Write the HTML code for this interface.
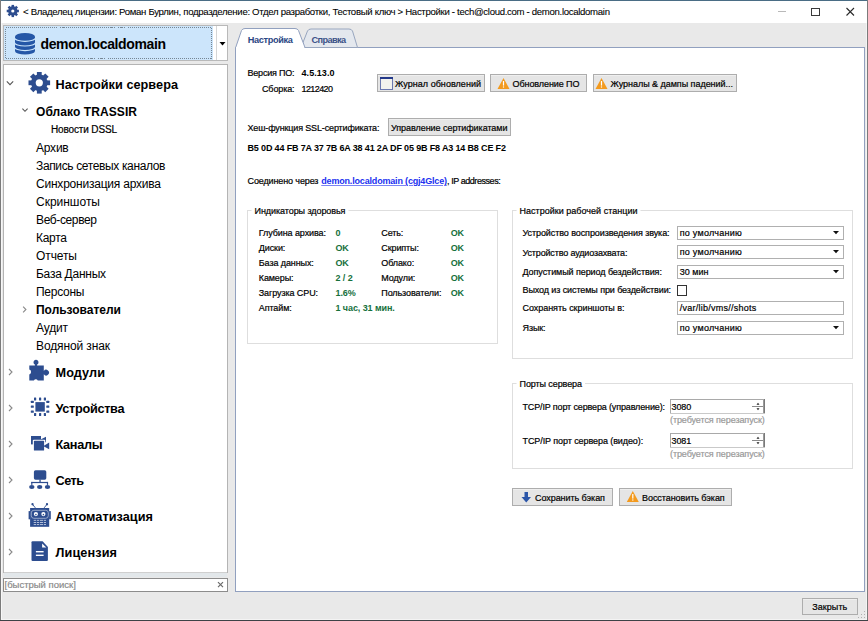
<!DOCTYPE html>
<html><head><meta charset="utf-8"><style>
html,body{margin:0;padding:0;width:868px;height:621px;overflow:hidden;background:#e9e9e9;}
.t{position:absolute;white-space:nowrap;font-family:"Liberation Sans",sans-serif;}
.n{-webkit-text-stroke:0.2px currentColor;}
svg{position:absolute;left:0;top:0;}
</style></head><body>
<svg width="868" height="621" viewBox="0 0 868 621">
<rect x="0" y="0" width="868" height="621" fill="#e9e9e9" />
<rect x="1" y="1" width="866" height="22" fill="#ffffff" />
<rect x="0" y="0" width="868" height="1" fill="#4a6d85" />
<rect x="0" y="0" width="1" height="621" fill="#7b7b7b" />
<rect x="867" y="0" width="1" height="621" fill="#7b7b7b" />
<rect x="0" y="620" width="868" height="1" fill="#3e4246" />
<rect x="1" y="23" width="1" height="597" fill="#f7f7f7" />
<rect x="1" y="619" width="866" height="1" fill="#f4f4f4" />
<rect x="866" y="23" width="1" height="597" fill="#f4f4f4" />
<rect x="11.55" y="4.9" width="2.5" height="6.1" fill="#2d4d8f" transform="rotate(0 12.8 11.0)"/>
<rect x="11.55" y="4.9" width="2.5" height="6.1" fill="#2d4d8f" transform="rotate(45 12.8 11.0)"/>
<rect x="11.55" y="4.9" width="2.5" height="6.1" fill="#2d4d8f" transform="rotate(90 12.8 11.0)"/>
<rect x="11.55" y="4.9" width="2.5" height="6.1" fill="#2d4d8f" transform="rotate(135 12.8 11.0)"/>
<rect x="11.55" y="4.9" width="2.5" height="6.1" fill="#2d4d8f" transform="rotate(180 12.8 11.0)"/>
<rect x="11.55" y="4.9" width="2.5" height="6.1" fill="#2d4d8f" transform="rotate(225 12.8 11.0)"/>
<rect x="11.55" y="4.9" width="2.5" height="6.1" fill="#2d4d8f" transform="rotate(270 12.8 11.0)"/>
<rect x="11.55" y="4.9" width="2.5" height="6.1" fill="#2d4d8f" transform="rotate(315 12.8 11.0)"/>
<circle cx="12.8" cy="11.0" r="4.7" fill="#2d4d8f"/>
<circle cx="12.8" cy="11.0" r="1.6" fill="#fff"/>
<rect x="778" y="11" width="8" height="1" fill="#b9b9b9" />
<rect x="811" y="8" width="9" height="1" fill="#3a3a3a" />
<rect x="811" y="15" width="9" height="1" fill="#3a3a3a" />
<rect x="811" y="8" width="1" height="8" fill="#3a3a3a" />
<rect x="819" y="8" width="1" height="8" fill="#3a3a3a" />
<path d="M846.5,8 L854,15.5 M854,8 L846.5,15.5" fill="none" stroke="#2a2a2a" stroke-width="1.1" />
<rect x="3" y="25" width="225" height="36" fill="#ffffff" />
<rect x="3" y="25" width="225" height="1" fill="#b9b9b9" />
<rect x="3" y="60" width="225" height="1" fill="#b9b9b9" />
<rect x="3" y="25" width="1" height="36" fill="#b9b9b9" />
<rect x="227" y="25" width="1" height="36" fill="#b9b9b9" />
<rect x="4" y="26" width="209" height="34" fill="#cce5fb" />
<rect x="5.5" y="27.5" width="206" height="31" fill="none" stroke="#3c4650" stroke-width="1" stroke-dasharray="1 1" shape-rendering="crispEdges" opacity="0.6"/>
<rect x="216" y="26" width="1" height="34" fill="#d6d6d6" />
<path d="M219.5,42 L225.5,42 L222.5,45.5 Z" fill="#000" stroke="none" stroke-width="1" />
<path d="M15,37 L15,51 A10,3.6 0 0 0 35,51 L35,37 Z" fill="#2557a7" stroke="none" stroke-width="1" />
<ellipse cx="25" cy="36.6" rx="10" ry="3.6" fill="#2557a7"/>
<path d="M14.5,37.8 A10.5,3.6 0 0 0 35.5,37.8" fill="none" stroke="#cce5fb" stroke-width="1.1" />
<path d="M14.5,42.4 A10.5,3.6 0 0 0 35.5,42.4" fill="none" stroke="#cce5fb" stroke-width="1.1" />
<path d="M14.5,47.0 A10.5,3.6 0 0 0 35.5,47.0" fill="none" stroke="#cce5fb" stroke-width="1.1" />
<rect x="3" y="64" width="225" height="509" fill="#ffffff" />
<rect x="3" y="64" width="225" height="1" fill="#b4b4b4" />
<rect x="3" y="572" width="225" height="1" fill="#b4b4b4" />
<rect x="3" y="64" width="1" height="509" fill="#b4b4b4" />
<rect x="227" y="64" width="1" height="509" fill="#b4b4b4" />
<path d="M6.8,81.4 L10,84.6 L13.2,81.4" fill="none" stroke="#555" stroke-width="1.1" />
<rect x="36.9" y="72.0" width="4.8" height="10.8" fill="#2d4d8f" transform="rotate(0 39.3 82.8)"/>
<rect x="36.9" y="72.0" width="4.8" height="10.8" fill="#2d4d8f" transform="rotate(45 39.3 82.8)"/>
<rect x="36.9" y="72.0" width="4.8" height="10.8" fill="#2d4d8f" transform="rotate(90 39.3 82.8)"/>
<rect x="36.9" y="72.0" width="4.8" height="10.8" fill="#2d4d8f" transform="rotate(135 39.3 82.8)"/>
<rect x="36.9" y="72.0" width="4.8" height="10.8" fill="#2d4d8f" transform="rotate(180 39.3 82.8)"/>
<rect x="36.9" y="72.0" width="4.8" height="10.8" fill="#2d4d8f" transform="rotate(225 39.3 82.8)"/>
<rect x="36.9" y="72.0" width="4.8" height="10.8" fill="#2d4d8f" transform="rotate(270 39.3 82.8)"/>
<rect x="36.9" y="72.0" width="4.8" height="10.8" fill="#2d4d8f" transform="rotate(315 39.3 82.8)"/>
<circle cx="39.3" cy="82.8" r="8.3" fill="#2d4d8f"/>
<circle cx="39.3" cy="82.8" r="3.6" fill="#fff"/>
<path d="M22.4,108.7 L25,111.3 L27.6,108.7" fill="none" stroke="#555" stroke-width="1.1" />
<path d="M23.1,306.7 L25.9,309.5 L23.1,312.3" fill="none" stroke="#8a8a8a" stroke-width="1.1" />
<path d="M9.0,369.0 L12.0,372 L9.0,375.0" fill="none" stroke="#8a8a8a" stroke-width="1.1" />
<path d="M9.0,405.0 L12.0,408 L9.0,411.0" fill="none" stroke="#8a8a8a" stroke-width="1.1" />
<path d="M9.0,441.0 L12.0,444 L9.0,447.0" fill="none" stroke="#8a8a8a" stroke-width="1.1" />
<path d="M9.0,477.0 L12.0,480 L9.0,483.0" fill="none" stroke="#8a8a8a" stroke-width="1.1" />
<path d="M9.0,513.0 L12.0,516 L9.0,519.0" fill="none" stroke="#8a8a8a" stroke-width="1.1" />
<path d="M9.0,549.0 L12.0,552 L9.0,555.0" fill="none" stroke="#8a8a8a" stroke-width="1.1" />
<path d="M29.3,365.4 L34.9,365.4 L34.9,364.6 A2.5,2.5 0 1 1 37.1,364.6 L37.1,365.4 L43.8,365.4 L43.8,371.0 A2.8,2.8 0 1 1 43.8,374.2 L43.8,380.4 L37.8,380.4 A2.2,2.2 0 0 0 33.9,380.4 L29.3,380.4 L29.3,374.4 A2.5,2.5 0 0 0 29.3,369.6 Z" fill="#2d4d8f" stroke="none" stroke-width="1" />
<rect x="35.4" y="402.1" width="9.4" height="9.5" fill="#2d4d8f" />
<rect x="34.0" y="397.6" width="2.2" height="2.9" rx="0.5" fill="#2d4d8f"/>
<rect x="34.0" y="413.1" width="2.2" height="2.9" rx="0.5" fill="#2d4d8f"/>
<rect x="39.0" y="397.6" width="2.2" height="2.9" rx="0.5" fill="#2d4d8f"/>
<rect x="39.0" y="413.1" width="2.2" height="2.9" rx="0.5" fill="#2d4d8f"/>
<rect x="43.8" y="397.6" width="2.2" height="2.9" rx="0.5" fill="#2d4d8f"/>
<rect x="43.8" y="413.1" width="2.2" height="2.9" rx="0.5" fill="#2d4d8f"/>
<rect x="30.8" y="400.79999999999995" width="3.0" height="2.2" rx="0.5" fill="#2d4d8f"/>
<rect x="46.3" y="400.79999999999995" width="3.0" height="2.2" rx="0.5" fill="#2d4d8f"/>
<rect x="30.8" y="405.59999999999997" width="3.0" height="2.2" rx="0.5" fill="#2d4d8f"/>
<rect x="46.3" y="405.59999999999997" width="3.0" height="2.2" rx="0.5" fill="#2d4d8f"/>
<rect x="30.8" y="410.5" width="3.0" height="2.2" rx="0.5" fill="#2d4d8f"/>
<rect x="46.3" y="410.5" width="3.0" height="2.2" rx="0.5" fill="#2d4d8f"/>
<rect x="31" y="436" width="10" height="8.4" fill="#2d4d8f" />
<path d="M40.5,439.6 L46,436.7 L46,442.2 L40.5,442.2 Z" fill="#2d4d8f" stroke="none" stroke-width="1" />
<rect x="32.8" y="439.7" width="12.5" height="11.5" rx="1" fill="#ffffff"/>
<rect x="33.9" y="440.8" width="10.2" height="9.7" rx="0.6" fill="#2d4d8f"/>
<path d="M43.5,445.9 L49.2,442.5 L49.2,449.3 L43.5,446.2 Z" fill="#2d4d8f" stroke="none" stroke-width="1" />
<rect x="33.9" y="470.3" width="12.4" height="9.4" rx="1.6" fill="#2d4d8f"/>
<rect x="39.4" y="479.5" width="1.3" height="3" fill="#2d4d8f" />
<rect x="31.3" y="481.9" width="16.4" height="1.2" fill="#2d4d8f" />
<rect x="31.2" y="481.9" width="1.2" height="3" fill="#2d4d8f" />
<rect x="46.9" y="481.9" width="1.2" height="3" fill="#2d4d8f" />
<ellipse cx="31.8" cy="486.9" rx="2.7" ry="2.0" fill="#2d4d8f"/>
<ellipse cx="39.7" cy="486.9" rx="2.7" ry="2.0" fill="#2d4d8f"/>
<ellipse cx="47.5" cy="486.9" rx="2.7" ry="2.0" fill="#2d4d8f"/>
<path d="M32.5,504.3 L35.4,507.9 M47,504.3 L44.1,507.9" fill="none" stroke="#2d4d8f" stroke-width="0.9" />
<circle cx="32.5" cy="504.25" r="1.15" fill="#2d4d8f"/><circle cx="47" cy="504.25" r="1.15" fill="#2d4d8f"/>
<rect x="30.1" y="508" width="19.1" height="18.8" fill="#2d4d8f" />
<rect x="28.6" y="511.1" width="1.6" height="8.2" fill="#2d4d8f" />
<rect x="49.1" y="511.1" width="1.7" height="8.2" fill="#2d4d8f" />
<rect x="31.3" y="510.3" width="17" height="8" rx="2.6" fill="none" stroke="#aebbd6" stroke-width="0.8"/>
<circle cx="35.9" cy="514.1" r="2.1" fill="#fff"/><circle cx="43.4" cy="514.1" r="2.1" fill="#fff"/>
<circle cx="35.9" cy="514.6" r="0.8" fill="#2d4d8f"/><circle cx="43.4" cy="514.6" r="0.8" fill="#2d4d8f"/>
<rect x="33.7" y="519.8499999999999" width="2.5" height="0.9" fill="#c2cbe0" />
<rect x="37.0" y="519.8499999999999" width="2.200000000000003" height="0.9" fill="#c2cbe0" />
<rect x="40.0" y="519.8499999999999" width="3.0" height="0.9" fill="#c2cbe0" />
<rect x="43.8" y="519.8499999999999" width="2.200000000000003" height="0.9" fill="#c2cbe0" />
<rect x="33.7" y="522.05" width="2.5" height="0.9" fill="#c2cbe0" />
<rect x="37.0" y="522.05" width="2.200000000000003" height="0.9" fill="#c2cbe0" />
<rect x="40.0" y="522.05" width="3.0" height="0.9" fill="#c2cbe0" />
<rect x="43.8" y="522.05" width="2.200000000000003" height="0.9" fill="#c2cbe0" />
<rect x="33.7" y="524.15" width="2.5" height="0.9" fill="#c2cbe0" />
<rect x="37.0" y="524.15" width="2.200000000000003" height="0.9" fill="#c2cbe0" />
<rect x="40.0" y="524.15" width="3.0" height="0.9" fill="#c2cbe0" />
<rect x="43.8" y="524.15" width="2.200000000000003" height="0.9" fill="#c2cbe0" />
<path d="M32.5,541.3 L42.6,541.3 L47.9,546.9 L47.9,559.9 Q47.9,560.9 46.9,560.9 L32.5,560.9 Q31.5,560.9 31.5,559.9 L31.5,542.3 Q31.5,541.3 32.5,541.3 Z" fill="#2d4d8f" stroke="none" stroke-width="1" />
<path d="M42.1,543.5 L46.3,547.5 L42.1,547.5 Z" fill="#fff" stroke="none" stroke-width="1" />
<rect x="35.9" y="551.0" width="7.7" height="1.4" fill="#fff" />
<rect x="35.9" y="554.6" width="7.7" height="1.4" fill="#fff" />
<rect x="4" y="573" width="223" height="4" fill="#e2e7ea" />
<rect x="4" y="572" width="223" height="1" fill="#cfcfcf" />
<rect x="3" y="578" width="225" height="14" fill="#ffffff" />
<rect x="3" y="578" width="225" height="1" fill="#8c8c8c" />
<rect x="3" y="591" width="225" height="1" fill="#8c8c8c" />
<rect x="3" y="578" width="1" height="14" fill="#8c8c8c" />
<rect x="227" y="578" width="1" height="14" fill="#8c8c8c" />
<path d="M218.0,582.2 L223.0,587.2 M223.0,582.2 L218.0,587.2" fill="none" stroke="#6a6a6a" stroke-width="1.2" />
<rect x="235" y="47" width="630" height="545" fill="#ffffff" />
<rect x="235" y="47" width="630" height="1" fill="#91a0bf" />
<rect x="235" y="591" width="630" height="1" fill="#91a0bf" />
<rect x="235" y="47" width="1" height="545" fill="#91a0bf" />
<rect x="864" y="47" width="1" height="545" fill="#91a0bf" />
<path d="M301,47.5 L307.5,31 Q308.5,29 311,29 L349,29 Q351.5,29 352.5,31 L357.5,47.5 Z" fill="#e4e8ee" stroke="#98a6bf" stroke-width="1" />
<path d="M235.5,48 L241.5,30.5 Q242.5,28.5 245,28.5 L295,28.5 Q297.5,28.5 298.5,30.5 L305,47.5" fill="#ffffff" stroke="#91a0bf" stroke-width="1" />
<rect x="236" y="47" width="68" height="1" fill="#ffffff" />
<rect x="377" y="74" width="108" height="18" fill="#e5e5e5" />
<rect x="377" y="74" width="108" height="1" fill="#adadad" />
<rect x="377" y="91" width="108" height="1" fill="#adadad" />
<rect x="377" y="74" width="1" height="18" fill="#adadad" />
<rect x="484" y="74" width="1" height="18" fill="#adadad" />
<rect x="378" y="75" width="106" height="1" fill="#efefef" />
<rect x="380" y="77" width="13" height="13" fill="#f2f2ee" />
<rect x="380" y="77" width="13" height="1" fill="#6a78b0" />
<rect x="380" y="89" width="13" height="1" fill="#6a78b0" />
<rect x="380" y="77" width="1" height="13" fill="#6a78b0" />
<rect x="392" y="77" width="1" height="13" fill="#6a78b0" />
<rect x="380" y="77" width="13" height="2" fill="#24398a" />
<rect x="490" y="74" width="97" height="18" fill="#e5e5e5" />
<rect x="490" y="74" width="97" height="1" fill="#adadad" />
<rect x="490" y="91" width="97" height="1" fill="#adadad" />
<rect x="490" y="74" width="1" height="18" fill="#adadad" />
<rect x="586" y="74" width="1" height="18" fill="#adadad" />
<rect x="491" y="75" width="95" height="1" fill="#efefef" />
<path d="M503.5,78 L509.5,89 L497.5,89 Z" fill="#f39a1e" stroke="none" stroke-width="1" stroke="#f39a1e" stroke-width="0.6" stroke-linejoin="round"/>
<rect x="502.9" y="81" width="1.2" height="4.6" fill="#fff" />
<rect x="502.9" y="86.4" width="1.2" height="1.2" fill="#fff" />
<rect x="593" y="74" width="144" height="18" fill="#e5e5e5" />
<rect x="593" y="74" width="144" height="1" fill="#adadad" />
<rect x="593" y="91" width="144" height="1" fill="#adadad" />
<rect x="593" y="74" width="1" height="18" fill="#adadad" />
<rect x="736" y="74" width="1" height="18" fill="#adadad" />
<rect x="594" y="75" width="142" height="1" fill="#efefef" />
<path d="M601.5,78 L607.5,89 L595.5,89 Z" fill="#f39a1e" stroke="none" stroke-width="1" stroke="#f39a1e" stroke-width="0.6" stroke-linejoin="round"/>
<rect x="600.9" y="81" width="1.2" height="4.6" fill="#fff" />
<rect x="600.9" y="86.4" width="1.2" height="1.2" fill="#fff" />
<rect x="388" y="118" width="123" height="18" fill="#e5e5e5" />
<rect x="388" y="118" width="123" height="1" fill="#adadad" />
<rect x="388" y="135" width="123" height="1" fill="#adadad" />
<rect x="388" y="118" width="1" height="18" fill="#adadad" />
<rect x="510" y="118" width="1" height="18" fill="#adadad" />
<rect x="389" y="119" width="121" height="1" fill="#efefef" />
<rect x="247" y="210" width="251" height="1" fill="#dedede" />
<rect x="247" y="343" width="251" height="1" fill="#dedede" />
<rect x="247" y="210" width="1" height="134" fill="#dedede" />
<rect x="497" y="210" width="1" height="134" fill="#dedede" />
<rect x="251.5" y="210" width="97.0" height="1" fill="#ffffff" />
<rect x="512" y="210" width="341" height="1" fill="#dedede" />
<rect x="512" y="358" width="341" height="1" fill="#dedede" />
<rect x="512" y="210" width="1" height="149" fill="#dedede" />
<rect x="852" y="210" width="1" height="149" fill="#dedede" />
<rect x="516.5" y="210" width="124.0" height="1" fill="#ffffff" />
<rect x="677" y="226" width="167" height="14" fill="#ffffff" />
<rect x="677" y="226" width="167" height="1" fill="#b0b0b0" />
<rect x="677" y="239" width="167" height="1" fill="#b0b0b0" />
<rect x="677" y="226" width="1" height="14" fill="#b0b0b0" />
<rect x="843" y="226" width="1" height="14" fill="#b0b0b0" />
<path d="M833,231.0 L839,231.0 L836,234.3 Z" fill="#111" stroke="none" stroke-width="1" />
<rect x="677" y="245" width="167" height="14" fill="#ffffff" />
<rect x="677" y="245" width="167" height="1" fill="#b0b0b0" />
<rect x="677" y="258" width="167" height="1" fill="#b0b0b0" />
<rect x="677" y="245" width="1" height="14" fill="#b0b0b0" />
<rect x="843" y="245" width="1" height="14" fill="#b0b0b0" />
<path d="M833,250.0 L839,250.0 L836,253.3 Z" fill="#111" stroke="none" stroke-width="1" />
<rect x="677" y="265" width="167" height="14" fill="#ffffff" />
<rect x="677" y="265" width="167" height="1" fill="#b0b0b0" />
<rect x="677" y="278" width="167" height="1" fill="#b0b0b0" />
<rect x="677" y="265" width="1" height="14" fill="#b0b0b0" />
<rect x="843" y="265" width="1" height="14" fill="#b0b0b0" />
<path d="M833,270.0 L839,270.0 L836,273.3 Z" fill="#111" stroke="none" stroke-width="1" />
<rect x="677" y="285" width="10" height="11" fill="#ffffff" />
<rect x="677" y="285" width="10" height="1" fill="#333333" />
<rect x="677" y="295" width="10" height="1" fill="#333333" />
<rect x="677" y="285" width="1" height="11" fill="#333333" />
<rect x="686" y="285" width="1" height="11" fill="#333333" />
<rect x="677" y="301" width="167" height="14" fill="#ffffff" />
<rect x="677" y="301" width="167" height="1" fill="#b0b0b0" />
<rect x="677" y="314" width="167" height="1" fill="#b0b0b0" />
<rect x="677" y="301" width="1" height="14" fill="#b0b0b0" />
<rect x="843" y="301" width="1" height="14" fill="#b0b0b0" />
<rect x="677" y="321" width="167" height="14" fill="#ffffff" />
<rect x="677" y="321" width="167" height="1" fill="#b0b0b0" />
<rect x="677" y="334" width="167" height="1" fill="#b0b0b0" />
<rect x="677" y="321" width="1" height="14" fill="#b0b0b0" />
<rect x="843" y="321" width="1" height="14" fill="#b0b0b0" />
<path d="M833,326.0 L839,326.0 L836,329.3 Z" fill="#111" stroke="none" stroke-width="1" />
<rect x="512" y="383" width="341" height="1" fill="#dedede" />
<rect x="512" y="468" width="341" height="1" fill="#dedede" />
<rect x="512" y="383" width="1" height="86" fill="#dedede" />
<rect x="852" y="383" width="1" height="86" fill="#dedede" />
<rect x="516.5" y="383" width="68.5" height="1" fill="#ffffff" />
<rect x="670" y="399" width="95" height="15" fill="#ffffff" />
<rect x="670" y="399" width="95" height="1" fill="#a9a9a9" />
<rect x="670" y="413" width="95" height="1" fill="#a9a9a9" />
<rect x="670" y="399" width="1" height="15" fill="#a9a9a9" />
<rect x="764" y="399" width="1" height="15" fill="#a9a9a9" />
<rect x="764" y="399" width="1" height="15" fill="#7a7a7a" />
<rect x="670" y="413" width="95" height="1" fill="#c9c9c9" />
<rect x="752" y="406" width="12" height="1" fill="#8a8a8a" />
<rect x="763" y="400" width="1" height="13" fill="#9a9a9a" />
<path d="M756.5,404.8 L758,402.8 L759.5,404.8 Z" fill="#222" stroke="none" stroke-width="1" />
<path d="M756.5,408.2 L758,410.2 L759.5,408.2 Z" fill="#222" stroke="none" stroke-width="1" />
<rect x="670" y="433" width="95" height="15" fill="#ffffff" />
<rect x="670" y="433" width="95" height="1" fill="#a9a9a9" />
<rect x="670" y="447" width="95" height="1" fill="#a9a9a9" />
<rect x="670" y="433" width="1" height="15" fill="#a9a9a9" />
<rect x="764" y="433" width="1" height="15" fill="#a9a9a9" />
<rect x="764" y="433" width="1" height="15" fill="#7a7a7a" />
<rect x="670" y="447" width="95" height="1" fill="#c9c9c9" />
<rect x="752" y="440" width="12" height="1" fill="#8a8a8a" />
<rect x="763" y="434" width="1" height="13" fill="#9a9a9a" />
<path d="M756.5,438.8 L758,436.8 L759.5,438.8 Z" fill="#222" stroke="none" stroke-width="1" />
<path d="M756.5,442.2 L758,444.2 L759.5,442.2 Z" fill="#222" stroke="none" stroke-width="1" />
<rect x="512" y="488" width="101" height="18" fill="#e5e5e5" />
<rect x="512" y="488" width="101" height="1" fill="#adadad" />
<rect x="512" y="505" width="101" height="1" fill="#adadad" />
<rect x="512" y="488" width="1" height="18" fill="#adadad" />
<rect x="612" y="488" width="1" height="18" fill="#adadad" />
<rect x="513" y="489" width="99" height="1" fill="#efefef" />
<path d="M524.5,492 L528,492 L528,497 L531,497 L526.25,502.5 L521.5,497 L524.5,497 Z" fill="#2a55a8" stroke="none" stroke-width="1" />
<rect x="619" y="488" width="113" height="18" fill="#e5e5e5" />
<rect x="619" y="488" width="113" height="1" fill="#adadad" />
<rect x="619" y="505" width="113" height="1" fill="#adadad" />
<rect x="619" y="488" width="1" height="18" fill="#adadad" />
<rect x="731" y="488" width="1" height="18" fill="#adadad" />
<rect x="620" y="489" width="111" height="1" fill="#efefef" />
<path d="M632.8,491 L638.8,502 L626.8,502 Z" fill="#f39a1e" stroke="none" stroke-width="1" stroke="#f39a1e" stroke-width="0.6" stroke-linejoin="round"/>
<rect x="632.1999999999999" y="494" width="1.2" height="4.6" fill="#fff" />
<rect x="632.1999999999999" y="499.4" width="1.2" height="1.2" fill="#fff" />
<rect x="802" y="598" width="56" height="17" fill="#e5e5e5" />
<rect x="802" y="598" width="56" height="1" fill="#adadad" />
<rect x="802" y="614" width="56" height="1" fill="#adadad" />
<rect x="802" y="598" width="1" height="17" fill="#adadad" />
<rect x="857" y="598" width="1" height="17" fill="#adadad" />
<rect x="803" y="599" width="54" height="1" fill="#efefef" />
<rect x="864" y="614" width="1" height="1" fill="#b0b0b0" />
<rect x="864" y="617" width="1" height="1" fill="#b0b0b0" />
<rect x="861" y="617" width="1" height="1" fill="#b0b0b0" />
<rect x="864" y="611" width="1" height="1" fill="#b0b0b0" />
<rect x="861" y="614" width="1" height="1" fill="#b0b0b0" />
<rect x="858" y="617" width="1" height="1" fill="#b0b0b0" />
</svg>
<div class="t n" style="left:23.00px;top:7.00px;font-size:9.6px;line-height:9.6px;font-weight:400;color:#000;letter-spacing:-0.315px;-webkit-text-stroke:0.08px #000;">&lt; Владелец лицензии: Роман Бурлин, подразделение: Отдел разработки, Тестовый ключ &gt; Настройки - tech@cloud.com - demon.localdomain</div>
<div class="t" style="left:40.50px;top:37.00px;font-size:14px;line-height:14px;font-weight:700;color:#000;letter-spacing:-0.373px;">demon.localdomain</div>
<div class="t" style="left:55.50px;top:79.00px;font-size:12.7px;line-height:12.7px;font-weight:700;color:#000;letter-spacing:0.042px;">Настройки сервера</div>
<div class="t" style="left:36.00px;top:106.00px;font-size:12px;line-height:12px;font-weight:700;color:#000;letter-spacing:0.082px;">Облако TRASSIR</div>
<div class="t n" style="left:51.00px;top:125.00px;font-size:10px;line-height:10px;font-weight:400;color:#000;letter-spacing:-0.148px;">Новости DSSL</div>
<div class="t" style="left:36.00px;top:142.00px;font-size:12px;line-height:12px;font-weight:400;color:#000;letter-spacing:-0.219px;">Архив</div>
<div class="t" style="left:36.00px;top:160.00px;font-size:12px;line-height:12px;font-weight:400;color:#000;letter-spacing:-0.359px;">Запись сетевых каналов</div>
<div class="t" style="left:36.00px;top:178.00px;font-size:12px;line-height:12px;font-weight:400;color:#000;letter-spacing:-0.215px;">Синхронизация архива</div>
<div class="t" style="left:36.00px;top:196.00px;font-size:12px;line-height:12px;font-weight:400;color:#000;letter-spacing:-0.010px;">Скриншоты</div>
<div class="t" style="left:36.00px;top:214.00px;font-size:12px;line-height:12px;font-weight:400;color:#000;letter-spacing:-0.373px;">Веб-сервер</div>
<div class="t" style="left:36.00px;top:232.00px;font-size:12px;line-height:12px;font-weight:400;color:#000;letter-spacing:-0.277px;">Карта</div>
<div class="t" style="left:36.00px;top:250.00px;font-size:12px;line-height:12px;font-weight:400;color:#000;letter-spacing:-0.097px;">Отчеты</div>
<div class="t" style="left:36.00px;top:268.00px;font-size:12px;line-height:12px;font-weight:400;color:#000;letter-spacing:-0.261px;">База Данных</div>
<div class="t" style="left:36.00px;top:286.00px;font-size:12px;line-height:12px;font-weight:400;color:#000;letter-spacing:-0.258px;">Персоны</div>
<div class="t" style="left:36.00px;top:304.00px;font-size:12px;line-height:12px;font-weight:700;color:#000;letter-spacing:-0.010px;">Пользователи</div>
<div class="t" style="left:36.00px;top:322.00px;font-size:12px;line-height:12px;font-weight:400;color:#000;letter-spacing:-0.168px;">Аудит</div>
<div class="t" style="left:36.00px;top:340.00px;font-size:12px;line-height:12px;font-weight:400;color:#000;letter-spacing:-0.119px;">Водяной знак</div>
<div class="t" style="left:55.50px;top:367.00px;font-size:12.7px;line-height:12.7px;font-weight:700;color:#000;letter-spacing:0.078px;">Модули</div>
<div class="t" style="left:55.50px;top:403.00px;font-size:12.7px;line-height:12.7px;font-weight:700;color:#000;letter-spacing:-0.292px;">Устройства</div>
<div class="t" style="left:55.50px;top:439.00px;font-size:12.7px;line-height:12.7px;font-weight:700;color:#000;letter-spacing:-0.316px;">Каналы</div>
<div class="t" style="left:55.50px;top:475.00px;font-size:12.7px;line-height:12.7px;font-weight:700;color:#000;letter-spacing:-0.526px;">Сеть</div>
<div class="t" style="left:55.50px;top:511.00px;font-size:12.7px;line-height:12.7px;font-weight:700;color:#000;letter-spacing:0.040px;">Автоматизация</div>
<div class="t" style="left:55.50px;top:547.00px;font-size:12.7px;line-height:12.7px;font-weight:700;color:#000;letter-spacing:0.109px;">Лицензия</div>
<div class="t n" style="left:4.50px;top:580.00px;font-size:9.5px;line-height:9.5px;font-weight:400;color:#8a8a8a;">[быстрый поиск]</div>
<div class="t" style="left:247.70px;top:36.00px;font-size:9.2px;line-height:9.2px;font-weight:700;color:#2b4683;letter-spacing:-0.342px;">Настройка</div>
<div class="t" style="left:311.50px;top:36.00px;font-size:9.2px;line-height:9.2px;font-weight:700;color:#3b5288;letter-spacing:-0.628px;">Справка</div>
<div class="t n" style="left:247.50px;top:69.00px;font-size:9px;line-height:9px;font-weight:400;color:#000;letter-spacing:-0.210px;">Версия ПО:</div>
<div class="t" style="left:301.50px;top:69.00px;font-size:9px;line-height:9px;font-weight:700;color:#000;letter-spacing:0.067px;">4.5.13.0</div>
<div class="t n" style="left:262.00px;top:85.00px;font-size:9px;line-height:9px;font-weight:400;color:#000;letter-spacing:-0.135px;">Сборка:</div>
<div class="t n" style="left:301.50px;top:85.00px;font-size:9px;line-height:9px;font-weight:400;color:#000;letter-spacing:-0.591px;">1212420</div>
<div class="t n" style="left:395.00px;top:80.00px;font-size:9px;line-height:9px;font-weight:400;color:#000;letter-spacing:0.041px;">Журнал обновлений</div>
<div class="t n" style="left:512.50px;top:80.00px;font-size:9px;line-height:9px;font-weight:400;color:#000;letter-spacing:-0.078px;">Обновление ПО</div>
<div class="t n" style="left:610.50px;top:80.00px;font-size:9px;line-height:9px;font-weight:400;color:#000;letter-spacing:-0.031px;">Журналы &amp; дампы падений...</div>
<div class="t n" style="left:247.50px;top:124.00px;font-size:9px;line-height:9px;font-weight:400;color:#000;letter-spacing:-0.144px;">Хеш-функция SSL-сертификата:</div>
<div class="t n" style="left:391.00px;top:124.00px;font-size:9px;line-height:9px;font-weight:400;color:#000;letter-spacing:-0.049px;">Управление сертификатами</div>
<div class="t" style="left:247.50px;top:144.00px;font-size:9px;line-height:9px;font-weight:700;color:#000;letter-spacing:-0.152px;">B5 0D 44 FB 7A 37 7B 6A 38 41 2A DF 05 9B F8 A3 14 B8 CE F2</div>
<div class="t n" style="left:247.50px;top:177.00px;font-size:9px;line-height:9px;font-weight:400;color:#000;letter-spacing:-0.121px;">Соединено через</div>
<div class="t" style="left:321.25px;top:177.00px;font-size:9px;line-height:9px;font-weight:700;color:#2030f0;letter-spacing:-0.177px;text-decoration:underline;text-decoration-color:#7a84f5;">demon.localdomain (cgj4Glce)</div>
<div class="t n" style="left:447.00px;top:177.00px;font-size:9px;line-height:9px;font-weight:400;color:#000;letter-spacing:-0.438px;">, IP addresses:</div>
<div class="t n" style="left:254.50px;top:207.00px;font-size:9px;line-height:9px;font-weight:400;color:#000;letter-spacing:-0.067px;">Индикаторы здоровья</div>
<div class="t n" style="left:258.75px;top:229.00px;font-size:9px;line-height:9px;font-weight:400;color:#000;letter-spacing:-0.088px;">Глубина архива:</div>
<div class="t" style="left:335.50px;top:229.00px;font-size:9px;line-height:9px;font-weight:700;color:#16703c;letter-spacing:-0.090px;">0</div>
<div class="t n" style="left:381.25px;top:229.00px;font-size:9px;line-height:9px;font-weight:400;color:#000;letter-spacing:-0.101px;">Сеть:</div>
<div class="t" style="left:450.75px;top:229.00px;font-size:9px;line-height:9px;font-weight:700;color:#16703c;letter-spacing:-0.243px;">OK</div>
<div class="t n" style="left:258.75px;top:244.00px;font-size:9px;line-height:9px;font-weight:400;color:#000;letter-spacing:-0.098px;">Диски:</div>
<div class="t" style="left:335.50px;top:244.00px;font-size:9px;line-height:9px;font-weight:700;color:#16703c;letter-spacing:-0.243px;">OK</div>
<div class="t n" style="left:381.25px;top:244.00px;font-size:9px;line-height:9px;font-weight:400;color:#000;letter-spacing:-0.099px;">Скрипты:</div>
<div class="t" style="left:450.75px;top:244.00px;font-size:9px;line-height:9px;font-weight:700;color:#16703c;letter-spacing:-0.243px;">OK</div>
<div class="t n" style="left:258.75px;top:259.00px;font-size:9px;line-height:9px;font-weight:400;color:#000;letter-spacing:-0.092px;">База данных:</div>
<div class="t" style="left:335.50px;top:259.00px;font-size:9px;line-height:9px;font-weight:700;color:#16703c;letter-spacing:-0.243px;">OK</div>
<div class="t n" style="left:381.25px;top:259.00px;font-size:9px;line-height:9px;font-weight:400;color:#000;letter-spacing:-0.101px;">Облако:</div>
<div class="t" style="left:450.75px;top:259.00px;font-size:9px;line-height:9px;font-weight:700;color:#16703c;letter-spacing:-0.243px;">OK</div>
<div class="t n" style="left:258.75px;top:274.00px;font-size:9px;line-height:9px;font-weight:400;color:#000;letter-spacing:-0.106px;">Камеры:</div>
<div class="t" style="left:335.50px;top:274.00px;font-size:9px;line-height:9px;font-weight:700;color:#16703c;letter-spacing:-0.079px;">2 / 2</div>
<div class="t n" style="left:381.25px;top:274.00px;font-size:9px;line-height:9px;font-weight:400;color:#000;letter-spacing:-0.104px;">Модули:</div>
<div class="t" style="left:450.75px;top:274.00px;font-size:9px;line-height:9px;font-weight:700;color:#16703c;letter-spacing:-0.243px;">OK</div>
<div class="t n" style="left:258.75px;top:289.00px;font-size:9px;line-height:9px;font-weight:400;color:#000;letter-spacing:-0.091px;">Загрузка CPU:</div>
<div class="t" style="left:335.50px;top:289.00px;font-size:9px;line-height:9px;font-weight:700;color:#16703c;letter-spacing:-0.123px;">1.6%</div>
<div class="t n" style="left:381.25px;top:289.00px;font-size:9px;line-height:9px;font-weight:400;color:#000;letter-spacing:-0.092px;">Пользователи:</div>
<div class="t" style="left:450.75px;top:289.00px;font-size:9px;line-height:9px;font-weight:700;color:#16703c;letter-spacing:-0.243px;">OK</div>
<div class="t n" style="left:258.75px;top:304.00px;font-size:9px;line-height:9px;font-weight:400;color:#000;letter-spacing:-0.101px;">Аптайм:</div>
<div class="t" style="left:335.50px;top:304.00px;font-size:9px;line-height:9px;font-weight:700;color:#16703c;letter-spacing:-0.084px;">1 час, 31 мин.</div>
<div class="t n" style="left:519.50px;top:207.00px;font-size:9px;line-height:9px;font-weight:400;color:#000;letter-spacing:0.019px;">Настройки рабочей станции</div>
<div class="t n" style="left:522.50px;top:229.00px;font-size:9px;line-height:9px;font-weight:400;color:#000;letter-spacing:-0.084px;">Устройство воспроизведения звука:</div>
<div class="t n" style="left:522.50px;top:249.00px;font-size:9px;line-height:9px;font-weight:400;color:#000;letter-spacing:-0.154px;">Устройство аудиозахвата:</div>
<div class="t n" style="left:522.50px;top:268.00px;font-size:9px;line-height:9px;font-weight:400;color:#000;letter-spacing:-0.078px;">Допустимый период бездействия:</div>
<div class="t n" style="left:522.50px;top:286.00px;font-size:9px;line-height:9px;font-weight:400;color:#000;letter-spacing:-0.098px;">Выход из системы при бездействии:</div>
<div class="t n" style="left:522.50px;top:304.00px;font-size:9px;line-height:9px;font-weight:400;color:#000;letter-spacing:-0.044px;">Сохранять скриншоты в:</div>
<div class="t n" style="left:522.50px;top:324.00px;font-size:9px;line-height:9px;font-weight:400;color:#000;letter-spacing:-0.106px;">Язык:</div>
<div class="t n" style="left:679.70px;top:229.00px;font-size:9px;line-height:9px;font-weight:400;color:#000;letter-spacing:0.247px;">по умолчанию</div>
<div class="t n" style="left:679.70px;top:248.00px;font-size:9px;line-height:9px;font-weight:400;color:#000;letter-spacing:0.247px;">по умолчанию</div>
<div class="t n" style="left:679.70px;top:268.00px;font-size:9px;line-height:9px;font-weight:400;color:#000;letter-spacing:0.019px;">30 мин</div>
<div class="t n" style="left:679.70px;top:304.00px;font-size:9px;line-height:9px;font-weight:400;color:#000;letter-spacing:0.259px;">/var/lib/vms//shots</div>
<div class="t n" style="left:679.70px;top:324.00px;font-size:9px;line-height:9px;font-weight:400;color:#000;letter-spacing:0.247px;">по умолчанию</div>
<div class="t n" style="left:519.50px;top:380.00px;font-size:9px;line-height:9px;font-weight:400;color:#000;letter-spacing:-0.091px;">Порты сервера</div>
<div class="t n" style="left:522.50px;top:403.00px;font-size:9px;line-height:9px;font-weight:400;color:#000;letter-spacing:-0.143px;">TCP/IP порт сервера (управление):</div>
<div class="t n" style="left:671.50px;top:403.00px;font-size:9px;line-height:9px;font-weight:400;color:#000;letter-spacing:-0.120px;">3080</div>
<div class="t n" style="left:670.00px;top:416.00px;font-size:9px;line-height:9px;font-weight:400;color:#999999;letter-spacing:-0.085px;">(требуется перезапуск)</div>
<div class="t n" style="left:522.50px;top:437.00px;font-size:9px;line-height:9px;font-weight:400;color:#000;letter-spacing:-0.082px;">TCP/IP порт сервера (видео):</div>
<div class="t n" style="left:671.50px;top:437.00px;font-size:9px;line-height:9px;font-weight:400;color:#000;letter-spacing:-0.120px;">3081</div>
<div class="t n" style="left:670.00px;top:450.00px;font-size:9px;line-height:9px;font-weight:400;color:#999999;letter-spacing:-0.085px;">(требуется перезапуск)</div>
<div class="t n" style="left:535.00px;top:494.00px;font-size:9px;line-height:9px;font-weight:400;color:#000;letter-spacing:-0.064px;">Сохранить бэкап</div>
<div class="t n" style="left:642.00px;top:494.00px;font-size:9px;line-height:9px;font-weight:400;color:#000;letter-spacing:-0.062px;">Восстановить бэкап</div>
<div class="t n" style="left:812.25px;top:603.00px;font-size:9px;line-height:9px;font-weight:400;color:#000;letter-spacing:0.055px;">Закрыть</div>
</body></html>
